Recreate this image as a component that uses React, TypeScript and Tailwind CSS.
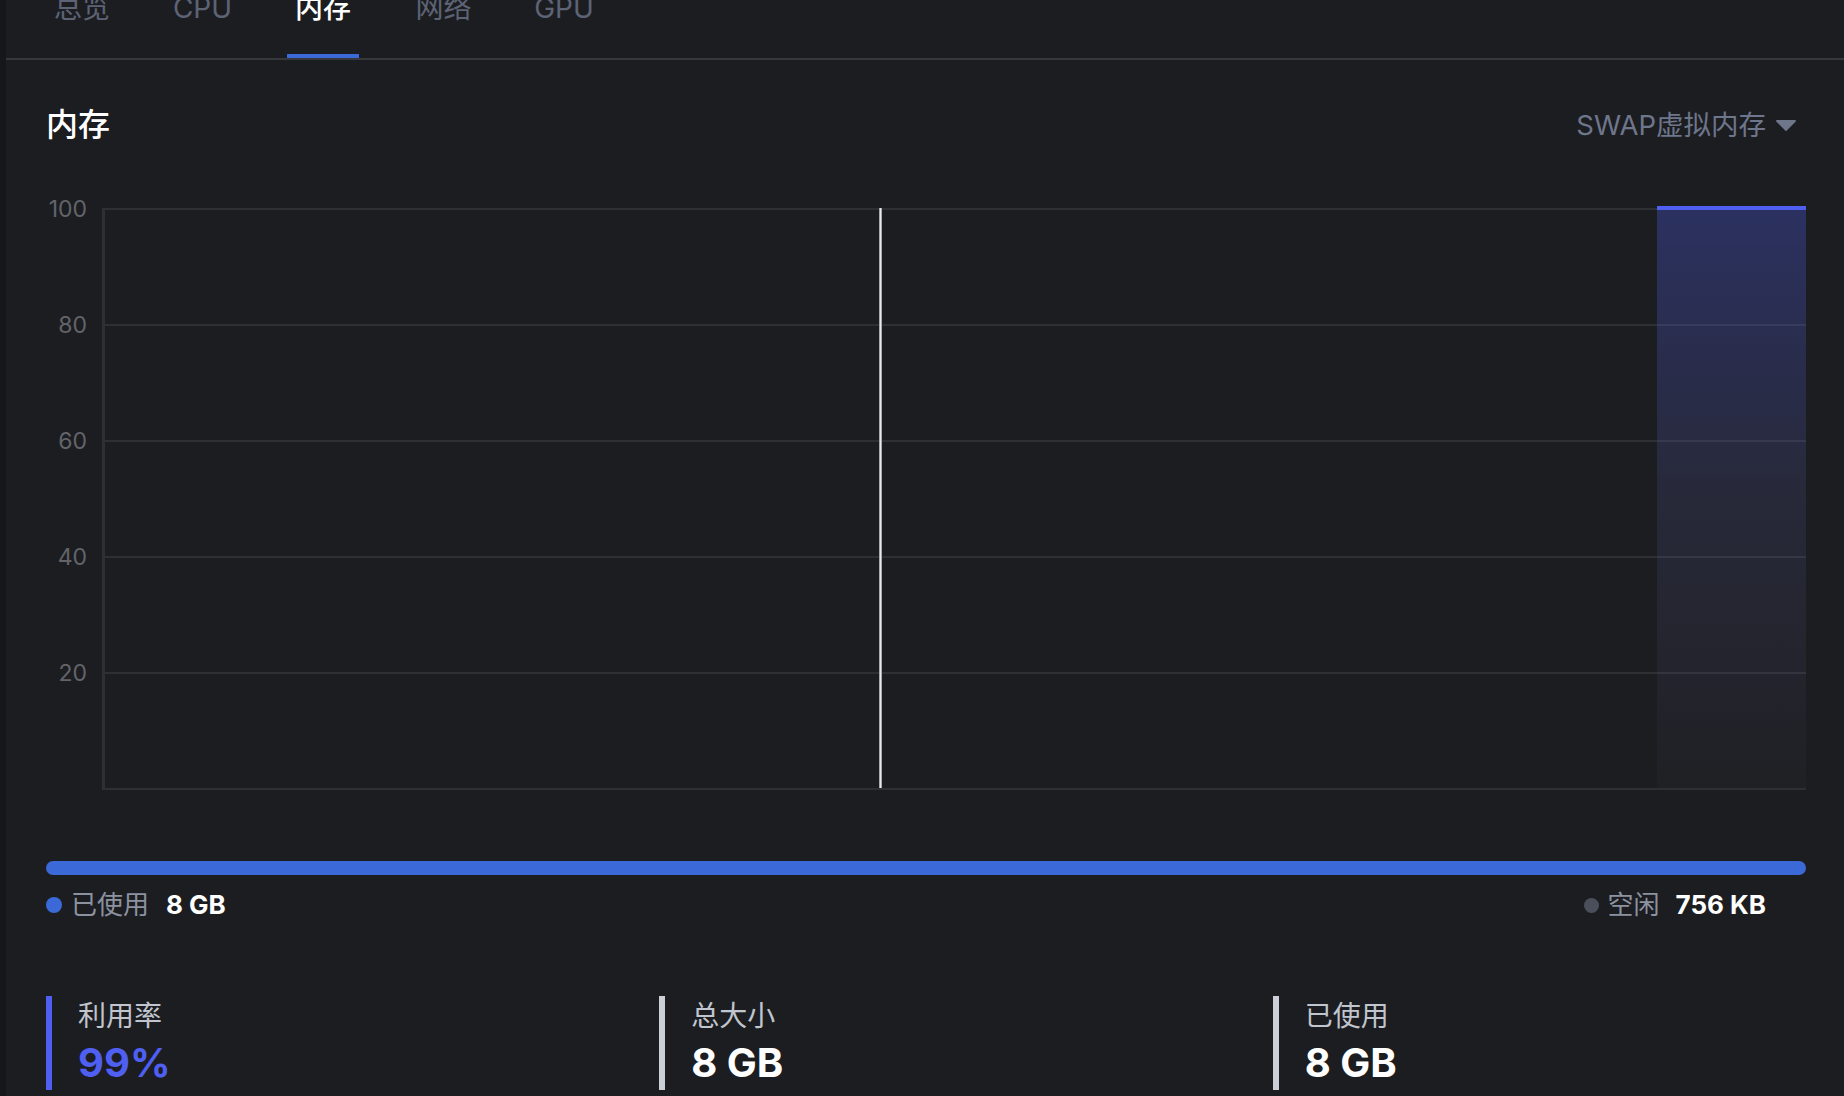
import React from 'react';

const tabs = ['总览', 'CPU', '内存', '网络', 'GPU'];

export default function App() {
  return (
    <div className="flex h-[1096px] w-full overflow-hidden bg-[#1c1d21] font-['Inter','Noto_Sans_CJK_SC',sans-serif]">
      <div className="w-[6px] shrink-0 bg-[#16171a]" />
      <div className="flex min-w-0 flex-1 flex-col">
        {/* Tabs */}
        <div className="-mt-[12px] flex gap-[48.5px] border-b-2 border-[#37383c] pl-[40px]">
          {tabs.map((t) => {
            const active = t === '内存';
            return (
              <div
                key={t}
                className={
                  active
                    ? 'h-[70px] w-[72px] border-b-4 border-[#3b6ad8] text-center text-[28px] leading-[40px] font-medium text-white'
                    : 'h-[70px] w-[72px] border-b-4 border-transparent text-center text-[28px] leading-[40px] text-[#5c6375]'
                }
              >
                {t}
              </div>
            );
          })}
        </div>

        <div className="flex flex-col pl-[40px] pr-[38px]">
          {/* Title row */}
          <div className="flex items-center justify-between pt-[43px]">
            <div className="text-[32px] leading-[44px] font-medium text-white">内存</div>
            <div className="mr-[9px] flex items-center gap-[9px] text-[27.5px] leading-[44px] text-[#6e768c]">
              <span>SWAP虚拟内存</span>
              <svg width="22" height="13" viewBox="0 0 22 13">
                <path d="M2 1 H20 a1 1 0 0 1 .8 1.6 L11.8 11.4 a1 1 0 0 1 -1.6 0 L1.2 2.6 A1 1 0 0 1 2 1Z" fill="#6e768c" />
              </svg>
            </div>
          </div>

          {/* Chart */}
          <div className="mt-[61px] flex">
            <div className="relative w-[56px] shrink-0 text-[23px] leading-[28px] text-[#62646a]">
              <span className="absolute right-[15px] top-[1px] -translate-y-1/2">100</span>
              <span className="absolute right-[15px] top-[117px] -translate-y-1/2">80</span>
              <span className="absolute right-[15px] top-[233px] -translate-y-1/2">60</span>
              <span className="absolute right-[15px] top-[349px] -translate-y-1/2">40</span>
              <span className="absolute right-[15px] top-[465px] -translate-y-1/2">20</span>
            </div>
            <div className="relative flex flex-1 flex-col border-b-2 border-l-[3px] border-[#2e2f33]">
              <div className="h-[116px] border-t-2 border-[#2e2f33]" />
              <div className="h-[116px] border-t-2 border-[#2e2f33]" />
              <div className="h-[116px] border-t-2 border-[#2e2f33]" />
              <div className="h-[116px] border-t-2 border-[#2e2f33]" />
              <div className="h-[116px] border-t-2 border-[#2e2f33]" />
              <div className="absolute bottom-0 left-[774px] top-0 w-[3px] bg-[linear-gradient(to_right,#8a8a8a,#e8e8e8,#8a8a8a)]" />
              <div className="absolute bottom-0 right-0 top-[-2px] w-[149px] border-t-4 border-[#4f5ff2] bg-[linear-gradient(to_bottom,rgba(79,95,242,0.3)_0%,rgba(95,100,175,0.17)_50%,rgba(255,255,255,0.015)_100%)]" />
            </div>
          </div>

          {/* Progress bar */}
          <div className="mt-[71px] h-[14px] rounded-full bg-[#3b6ad8]" />

          {/* Legend */}
          <div className="mt-[12px] flex items-center justify-between text-[26px] leading-[36px]">
            <div className="flex items-center">
              <span className="h-[16px] w-[16px] rounded-full bg-[#3b6ad8]" />
              <span className="ml-[9px] text-[#8c92a0]">已使用</span>
              <span className="ml-[17px] font-bold text-white">8 GB</span>
            </div>
            <div className="mr-[40px] flex items-center">
              <span className="h-[15px] w-[15px] rounded-full bg-[#4b4f5b]" />
              <span className="ml-[9px] text-[#8c92a0]">空闲</span>
              <span className="ml-[16px] font-bold text-white">756 KB</span>
            </div>
          </div>

          {/* Stats */}
          <div className="mt-[73px] grid grid-cols-3 gap-x-[80px]">
            <div className="border-l-[6px] border-[#4f5ff2] pb-[4px] pl-[26px]">
              <div className="pt-[1px] text-[28px] leading-[38px] text-[#c0c5ce]">利用率</div>
              <div className="mt-[5px] text-[40px] leading-[46px] font-bold text-[#4f5ff2]">99%</div>
            </div>
            <div className="border-l-[6px] border-[#cbd0d8] pb-[4px] pl-[26px]">
              <div className="pt-[1px] text-[28px] leading-[38px] text-[#c0c5ce]">总大小</div>
              <div className="mt-[5px] text-[40px] leading-[46px] font-bold text-white">8 GB</div>
            </div>
            <div className="border-l-[6px] border-[#cbd0d8] pb-[4px] pl-[26px]">
              <div className="pt-[1px] text-[28px] leading-[38px] text-[#c0c5ce]">已使用</div>
              <div className="mt-[5px] text-[40px] leading-[46px] font-bold text-white">8 GB</div>
            </div>
          </div>
        </div>
      </div>
    </div>
  );
}
